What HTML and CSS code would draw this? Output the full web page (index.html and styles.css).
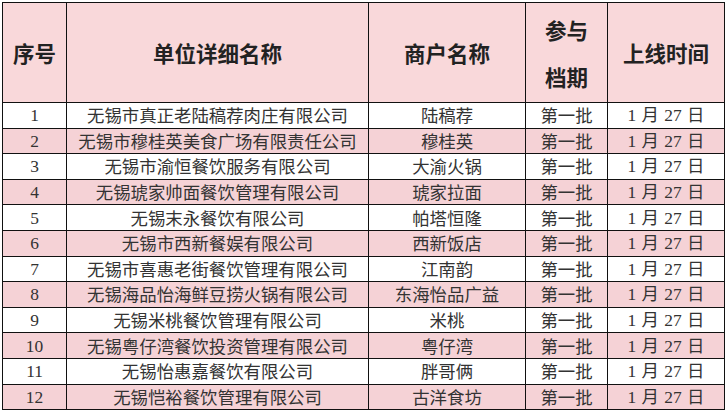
FILE: index.html
```html
<!DOCTYPE html>
<html lang="zh-CN">
<head>
<meta charset="utf-8">
<title>名单</title>
<link rel="stylesheet" href="styles.css">
</head>
<body>
<table class="list">
  <colgroup>
    <col class="c-no">
    <col class="c-unit">
    <col class="c-shop">
    <col class="c-batch">
    <col class="c-date">
  </colgroup>
  <thead>
    <tr class="head">
      <th>序号</th>
      <th>单位详细名称</th>
      <th>商户名称</th>
      <th class="two">参与<br>档期</th>
      <th>上线时间</th>
    </tr>
  </thead>
  <tbody>
    <tr><td class="num">1</td><td>无锡市真正老陆稿荐肉庄有限公司</td><td>陆稿荐</td><td>第一批</td><td class="date">1 月 27 日</td></tr>
    <tr class="pink"><td class="num">2</td><td>无锡市穆桂英美食广场有限责任公司</td><td>穆桂英</td><td>第一批</td><td class="date">1 月 27 日</td></tr>
    <tr><td class="num">3</td><td>无锡市渝恒餐饮服务有限公司</td><td>大渝火锅</td><td>第一批</td><td class="date">1 月 27 日</td></tr>
    <tr class="pink"><td class="num">4</td><td>无锡琥家帅面餐饮管理有限公司</td><td>琥家拉面</td><td>第一批</td><td class="date">1 月 27 日</td></tr>
    <tr><td class="num">5</td><td>无锡末永餐饮有限公司</td><td>帕塔恒隆</td><td>第一批</td><td class="date">1 月 27 日</td></tr>
    <tr class="pink"><td class="num">6</td><td>无锡市西新餐娱有限公司</td><td>西新饭店</td><td>第一批</td><td class="date">1 月 27 日</td></tr>
    <tr><td class="num">7</td><td>无锡市喜惠老街餐饮管理有限公司</td><td>江南韵</td><td>第一批</td><td class="date">1 月 27 日</td></tr>
    <tr class="pink"><td class="num">8</td><td>无锡海品怡海鲜豆捞火锅有限公司</td><td>东海怡品广益</td><td>第一批</td><td class="date">1 月 27 日</td></tr>
    <tr><td class="num">9</td><td>无锡米桃餐饮管理有限公司</td><td>米桃</td><td>第一批</td><td class="date">1 月 27 日</td></tr>
    <tr class="pink"><td class="num">10</td><td>无锡粤仔湾餐饮投资管理有限公司</td><td>粤仔湾</td><td>第一批</td><td class="date">1 月 27 日</td></tr>
    <tr><td class="num">11</td><td>无锡怡惠嘉餐饮有限公司</td><td>胖哥俩</td><td>第一批</td><td class="date">1 月 27 日</td></tr>
    <tr class="pink"><td class="num">12</td><td>无锡恺裕餐饮管理有限公司</td><td>古洋食坊</td><td>第一批</td><td class="date">1 月 27 日</td></tr>
  </tbody>
</table>
</body>
</html>
```

FILE: styles.css
```css
html, body {
  margin: 0;
  padding: 0;
  background: #ffffff;
}

body {
  padding: 2px 0 0 2px;
}

.list {
  border-collapse: collapse;
  table-layout: fixed;
  width: 722px;
  font-family: "Noto Sans CJK SC", "Liberation Serif", serif;
  color: #333333;
}

.c-no { width: 64px; }
.c-unit { width: 302px; }
.c-shop { width: 157px; }
.c-batch { width: 82px; }
.c-date { width: 117px; }

.list th,
.list td {
  border: 1px solid #111111;
  padding: 0;
  text-align: center;
  vertical-align: middle;
  white-space: nowrap;
  overflow: hidden;
}

.head {
  height: 100px;
  background: #f9d8da;
}

.head th {
  font-size: 21.5px;
  font-weight: 700;
  color: #222222;
  line-height: 28px;
}

.head th.two {
  line-height: 47px;
}

.list td {
  height: 24.6px;
  font-size: 17.4px;
  line-height: 20px;
  font-weight: 400;
}

.pink {
  background: #f5d2d6;
}

.num,
.date {
  font-family: "Liberation Serif", "Noto Sans CJK SC", serif;
  font-size: 18px;
}

.date {
  word-spacing: 1px;
}
```
